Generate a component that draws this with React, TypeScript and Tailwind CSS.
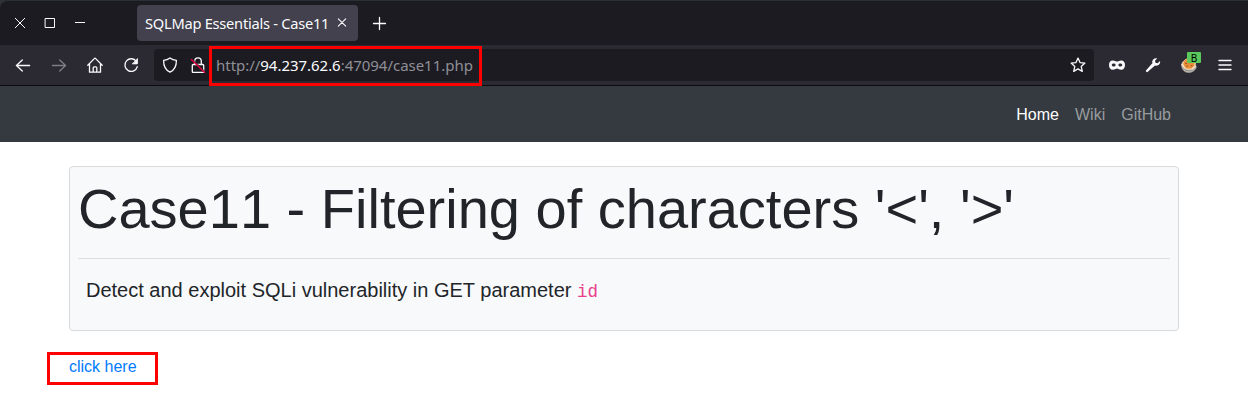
import type { ReactNode } from "react";

function ToolButton({ children }: { children: ReactNode }) {
  return <button className="flex h-8 w-9 shrink-0 items-center justify-center text-[#fbfbfe]">{children}</button>;
}

function Icon({ children, size = 16 }: { children: ReactNode; size?: number }) {
  return (
    <svg width={size} height={size} viewBox={`0 0 ${size} ${size}`} fill="none" stroke="currentColor" strokeWidth="1.3" strokeLinecap="round" strokeLinejoin="round" className="block shrink-0">
      {children}
    </svg>
  );
}

function TabBar() {
  return (
    <div className="flex h-[45px] items-center rounded-tl-lg border-t border-[#2b3036] bg-[#1c1b22] pb-px text-[#fbfbfe]">
      <div className="flex pl-[5px]">
        <span className="flex w-[30px] justify-center">
          <Icon size={12}><path d="M1.3 1.3 10.7 10.7M10.7 1.3 1.3 10.7" strokeWidth="1" /></Icon>
        </span>
        <span className="flex w-[30px] justify-center">
          <Icon size={12}><path d="M1.5 1.5h9v9h-9z" strokeWidth="1" strokeLinejoin="miter" /></Icon>
        </span>
        <span className="flex w-[30px] justify-center">
          <Icon size={12}><path d="M1 5.5h10" strokeWidth="1" strokeLinecap="butt" /></Icon>
        </span>
      </div>
      <div className="ml-[42px] flex h-9 w-[221px] items-center rounded bg-[#42414d] pt-px pl-2">
        <span className="w-[184px] shrink-0 whitespace-nowrap text-[14.67px] leading-5 tracking-[-0.26px]">SQLMap Essentials - Case11</span>
        <span className="ml-[7px]">
          <Icon size={12}><path d="M2.3 1.8 9.7 9.2M9.7 1.8 2.3 9.2" strokeWidth="1.1" /></Icon>
        </span>
      </div>
      <span className="ml-[14px]">
        <Icon><path d="M7.500 2.500v12M1.500 8.500h12" /></Icon>
      </span>
    </div>
  );
}

function AddressBar() {
  return (
    <div className="relative mx-[5px] flex h-8 flex-1 items-center rounded bg-[#1c1b22] text-[#fbfbfe]">
      <span className="ml-2"><Icon>
        <path d="M8 .9c2 1.5 4.2 2.2 6.4 2.4C14.5 9 12.2 13.3 8 15.2 3.8 13.3 1.5 9 1.6 3.300 3.800 3.100 6 2.400 8 .9z" />
      </Icon></span>
      <span className="ml-3"><Icon>
        <path d="M4.700 7.500V4.100a3.300 3.300 0 0 1 6.600 0v3.400M3.300 7.500h9.400a1 1 0 0 1 1 1v6a1 1 0 0 1-1 1H3.300a1 1 0 0 1-1-1v-6a1 1 0 0 1 1-1z" />
        <path d="M2.700 2.300 15 14.600" stroke="#1c1b22" strokeWidth="1" />
        <path d="M1.400 2.500 14.700 15.500" stroke="#e4003a" strokeWidth="1.400" />
      </Icon></span>
      <span className="ml-[10px] whitespace-nowrap text-[15px] leading-5 tracking-[-0.03px] text-[#8f8f96]">
        http://<span className="text-[#fbfbfe]">94.237.62.6</span>:47094/case11.php
      </span>
      <span className="mr-2 ml-auto"><Icon>
        <path d="m8 1.100 2 4.500 4.900.5-3.700 3.300 1.100 5L8 11.900l-4.300 2.500 1.100-5L1.100 6.100 6 5.600z" />
      </Icon></span>
      <span className="pointer-events-none absolute -top-[3px] left-[55px] h-10 w-[273px] border-3 border-[#fe0000]" />
    </div>
  );
}

function Toolbar() {
  return (
    <div className="flex h-10 items-center bg-[#2b2a33] px-[5px]">
      <ToolButton><Icon><path d="M14.600 8.500H1.400M7.300 3 1.400 8.500l5.900 5.500" /></Icon></ToolButton>
      <ToolButton><span className="opacity-40"><Icon><path d="M1.400 8.500h13.200M8.700 3l5.900 5.500L8.700 14" /></Icon></span></ToolButton>
      <ToolButton><Icon>
        <path d="M.8 8.200 7.300 1.600a1 1 0 0 1 1.400 0l6.500 6.600M2.500 7v8.200h11V7M6.200 15V10.800a1 1 0 0 1 1-1h1.600a1 1 0 0 1 1 1V15" />
      </Icon></ToolButton>
      <ToolButton><Icon>
        <path d="M13.400 4.500A6.300 6.300 0 1 0 14.300 9.600" />
        <path d="M14.500 1.900v4.500a.5.500 0 0 1-.5.500H9.600z" fill="currentColor" strokeWidth=".8" />
      </Icon></ToolButton>
      <AddressBar />
      <ToolButton><Icon>
        <path fillRule="evenodd" fill="currentColor" stroke="none" d="M3.700 3.500C1.500 3.500 0 5 0 8c0 3 1.500 4.700 3.700 4.700 2 0 3.200-1.300 4.300-1.300s2.300 1.300 4.300 1.300C14.500 12.700 16 11 16 8c0-3-1.500-4.500-3.700-4.500C10.300 3.500 9.300 4.600 8 4.600S5.700 3.500 3.700 3.500zm1 3c1.100 0 2 .7 2 1.500s-.9 1.500-2 1.500-2-.7-2-1.500.9-1.500 2-1.500zm6.600 0c1.100 0 2 .7 2 1.500s-.9 1.500-2 1.500-2-.7-2-1.500.9-1.500 2-1.500z" />
      </Icon></ToolButton>
      <ToolButton><Icon>
        <path fill="currentColor" stroke="none" d="M15 4.100 12.600 6.300 10.500 5.700 10 3.700 12.300 1.300C9.700.6 7.300 2.300 7.200 4.700c0 .5.100 1 .3 1.400L1.200 13.200a1.100 1.100 0 0 0 1.600 1.600l7.200-6.200c2.800 1 5.900-1.500 5-4.500z" />
      </Icon></ToolButton>
      <ToolButton>
        <span className="relative block h-4 w-4">
          <Icon>
            <path d="M1.500 5C-.2 8 .6 12.300 4 14.600c4 2.300 9.900.4 11.300-4.500L14 5z" fill="#cfc6bd" stroke="#a8a29c" strokeWidth=".7" />
            <path d="M2 9.500c.5 2.500 3 4.500 6 4.500 3.200 0 5.700-1.800 6-4.300" stroke="#7d7875" strokeWidth=".9" />
            <ellipse cx="8" cy="6.800" rx="6" ry="5.300" fill="#ea8e3a" stroke="#ffd6a0" strokeWidth=".7" />
            <path d="M4.700 6.200h.8M8.200 5.800h.1M5.800 9h.8M10.200 8.700h.7" stroke="#914719" strokeWidth="1.100" />
            <path d="m.9 7.500 2.700 3.400M11.500 11.900l2.700-2.400" stroke="#f5e5cf" />
          </Icon>
          <span className="absolute -top-[5px] left-[6px] flex h-[11px] w-[14px] items-center justify-center rounded-[1px] bg-[#5ac85a] text-[10px] leading-none text-black">B</span>
        </span>
      </ToolButton>
      <ToolButton><Icon><path d="M2 3.500h12M2 8h12M2 12.500h12" strokeWidth="1.400" /></Icon></ToolButton>
    </div>
  );
}

export default function App() {
  return (
    <div className="h-[405px] overflow-hidden bg-white font-['Liberation_Sans',Arial,sans-serif] text-[#212529]">
      <header className="border-b border-[#0c0c0d] bg-[#2f3237] font-['Noto_Sans',sans-serif]">
        <TabBar />
        <Toolbar />
      </header>
      <nav className="flex h-14 items-center justify-end bg-[#343a40] pt-0.5 pr-[69px] text-base text-[#999c9f]">
        <a className="px-2 text-white">Home</a>
        <a className="px-2">Wiki</a>
        <a className="px-2">GitHub</a>
      </nav>
      <main className="mx-[69px] pt-6">
        <section className="h-[165px] rounded border border-[#d8dadc] bg-[#f8f9fa] px-2 pt-2">
          <h1 className="h-[67px] text-[56px] leading-[67px] font-light whitespace-nowrap [font-kerning:none]">Case11 - Filtering of characters '&lt;', '&gt;'</h1>
          <hr className="mt-4 border-[#dcdee0]" />
          <p className="mt-4 pl-2 text-xl leading-[30px]">
            Detect and exploit SQLi vulnerability in GET parameter{" "}
            <code className="font-['Liberation_Mono',monospace] text-[17.5px] text-[#e83e8c]">id</code>
          </p>
        </section>
        <a className="mt-[21px] -ml-[22px] flex h-[33px] w-[111px] items-center border-3 border-[#fe0000] pb-1 pl-[19px] text-base text-[#007bff]">click here</a>
      </main>
    </div>
  );
}
